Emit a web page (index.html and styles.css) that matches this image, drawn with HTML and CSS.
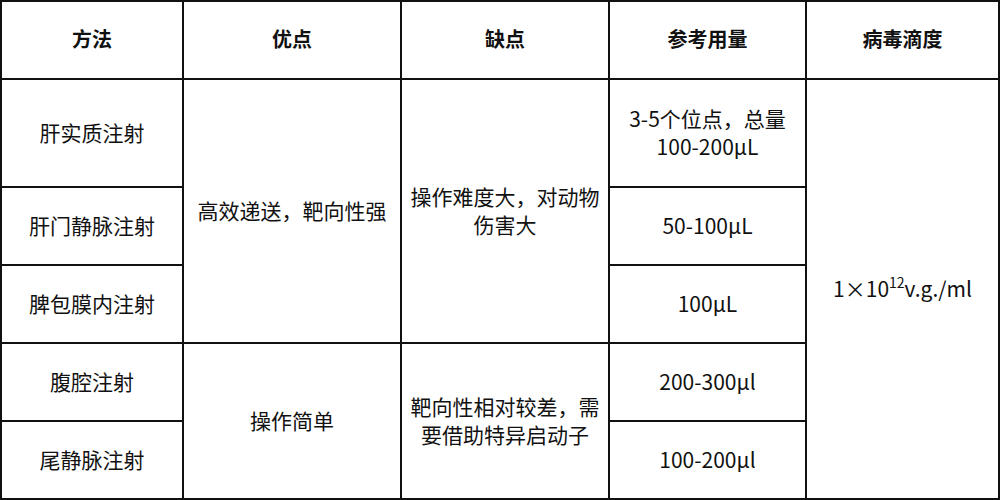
FILE: index.html
```html
<!DOCTYPE html>
<html lang="zh-CN">
<head>
<meta charset="utf-8">
<link rel="stylesheet" href="styles.css">
</head>
<body>
<table class="grid">
  <thead>
    <tr class="r-head">
      <th class="c1">方法</th><th class="c2">优点</th><th class="c3">缺点</th><th class="c4">参考用量</th><th class="c5">病毒滴度</th>
    </tr>
  </thead>
  <tbody>
    <tr class="r1">
      <td>肝实质注射</td>
      <td rowspan="3">高效递送，靶向性强</td>
      <td rowspan="3">操作难度大，对动物伤害大</td>
      <td>3-5个位点，总量100-200μL</td>
      <td rowspan="5">1×10<sup>12</sup>v.g./ml</td>
    </tr>
    <tr class="r2">
      <td>肝门静脉注射</td>
      <td>50-100μL</td>
    </tr>
    <tr class="r3">
      <td>脾包膜内注射</td>
      <td>100μL</td>
    </tr>
    <tr class="r4">
      <td>腹腔注射</td>
      <td rowspan="2">操作简单</td>
      <td rowspan="2">靶向性相对较差，需要借助特异启动子</td>
      <td>200-300μl</td>
    </tr>
    <tr class="r5">
      <td>尾静脉注射</td>
      <td>100-200μl</td>
    </tr>
  </tbody>
</table>
</body>
</html>
```
FILE: styles.css
```css
html, body {
  margin: 0;
  padding: 0;
  background: #ffffff;
}
body {
  width: 1000px;
  height: 500px;
  overflow: hidden;
  font-family: "Noto Sans CJK SC", "Noto Sans", sans-serif;
  color: #111;
}
.grid {
  width: 1000px;
  box-sizing: border-box;
  border-collapse: separate;
  border-spacing: 0;
  border-top: 2px solid #111;
  border-left: 2px solid #111;
  table-layout: fixed;
  font-size: 21px;
  line-height: 28px;
}
.grid th, .grid td {
  box-sizing: border-box;
  border-right: 2px solid #111;
  border-bottom: 2px solid #111;
  text-align: center;
  vertical-align: middle;
  padding: 0 8px 3px;
}
.c1 { width: 182px; }
.c2 { width: 218px; }
.c3 { width: 208px; }
.c4 { width: 197px; }
.c5 { width: 193px; }
.grid th {
  font-weight: 700;
  font-size: 20px;
}
.r-head { height: 78px; }
.r1 { height: 108px; }
.r2 { height: 78px; }
.r3 { height: 78px; }
.r4 { height: 78px; }
.r5 { height: 78px; }
.grid sup {
  font-size: 14px;
  vertical-align: 9px;
  line-height: 0;
}
```
